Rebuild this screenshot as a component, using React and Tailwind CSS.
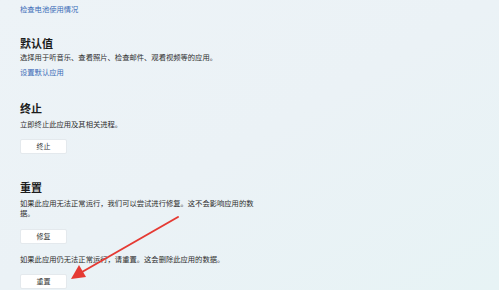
const font = { fontFamily: '"Noto Sans CJK SC", "Noto Sans", sans-serif' };

const Button = ({ children, className = '' }) => (
  <button
    className={`w-[47px] h-[15px] rounded-[2px] bg-white border border-[#e4e9ed] text-[7px] leading-[13px] text-[#333] flex items-center justify-center ${className}`}
  >
    {children}
  </button>
);

const Heading = ({ children, className = '' }) => (
  <h2 className={`text-[11px] leading-[14px] font-semibold text-[#1c1c1c] ${className}`}>{children}</h2>
);

const Body = ({ children, className = '' }) => (
  <p className={`text-[7.3px] leading-[10px] text-[#2e2e2e] ${className}`}>{children}</p>
);

const App = () => {
  return (
    <div
      className="relative w-[499px] h-[290px] overflow-hidden bg-gradient-to-br from-[#edf3f7] via-[#ebf2f6] to-[#e7f3f5]"
      style={font}
    >
      <div className="flex flex-col items-start pl-[20px] pt-[4px]">
        <a className="text-[7.3px] leading-[10px] text-[#3b6cb7]">检查电池使用情况</a>

        {/* 默认值 */}
        <Heading className="mt-[22px]">默认值</Heading>
        <Body className="mt-[2px]">选择用于听音乐、查看照片、检查邮件、观看视频等的应用。</Body>
        <a className="mt-[5px] text-[7.3px] leading-[10px] text-[#3b6cb7]">设置默认应用</a>

        {/* 终止 */}
        <Heading className="mt-[24px]">终止</Heading>
        <Body className="mt-[4px]">立即终止此应用及其相关进程。</Body>
        <Button className="mt-[10px]">终止</Button>

        {/* 重置 */}
        <Heading className="mt-[26px]">重置</Heading>
        <Body className="mt-[4px] w-[237px]">
          如果此应用无法正常运行，我们可以尝试进行修复。这不会影响应用的数据。
        </Body>
        <Button className="mt-[11px]">修复</Button>
        <Body className="mt-[10px]">如果此应用仍无法正常运行，请重置。这会删除此应用的数据。</Body>
        <Button className="mt-[10px]">重置</Button>
      </div>

      {/* red annotation arrow */}
      <svg className="absolute left-0 top-0" width="499" height="290" viewBox="0 0 499 290">
        <line x1="178" y1="217" x2="82" y2="272" stroke="#e53a33" strokeWidth="2" strokeLinecap="round" />
        <polygon points="71,279 79,265 86,277" fill="#e53a33" />
      </svg>
    </div>
  );
};

export default App;
